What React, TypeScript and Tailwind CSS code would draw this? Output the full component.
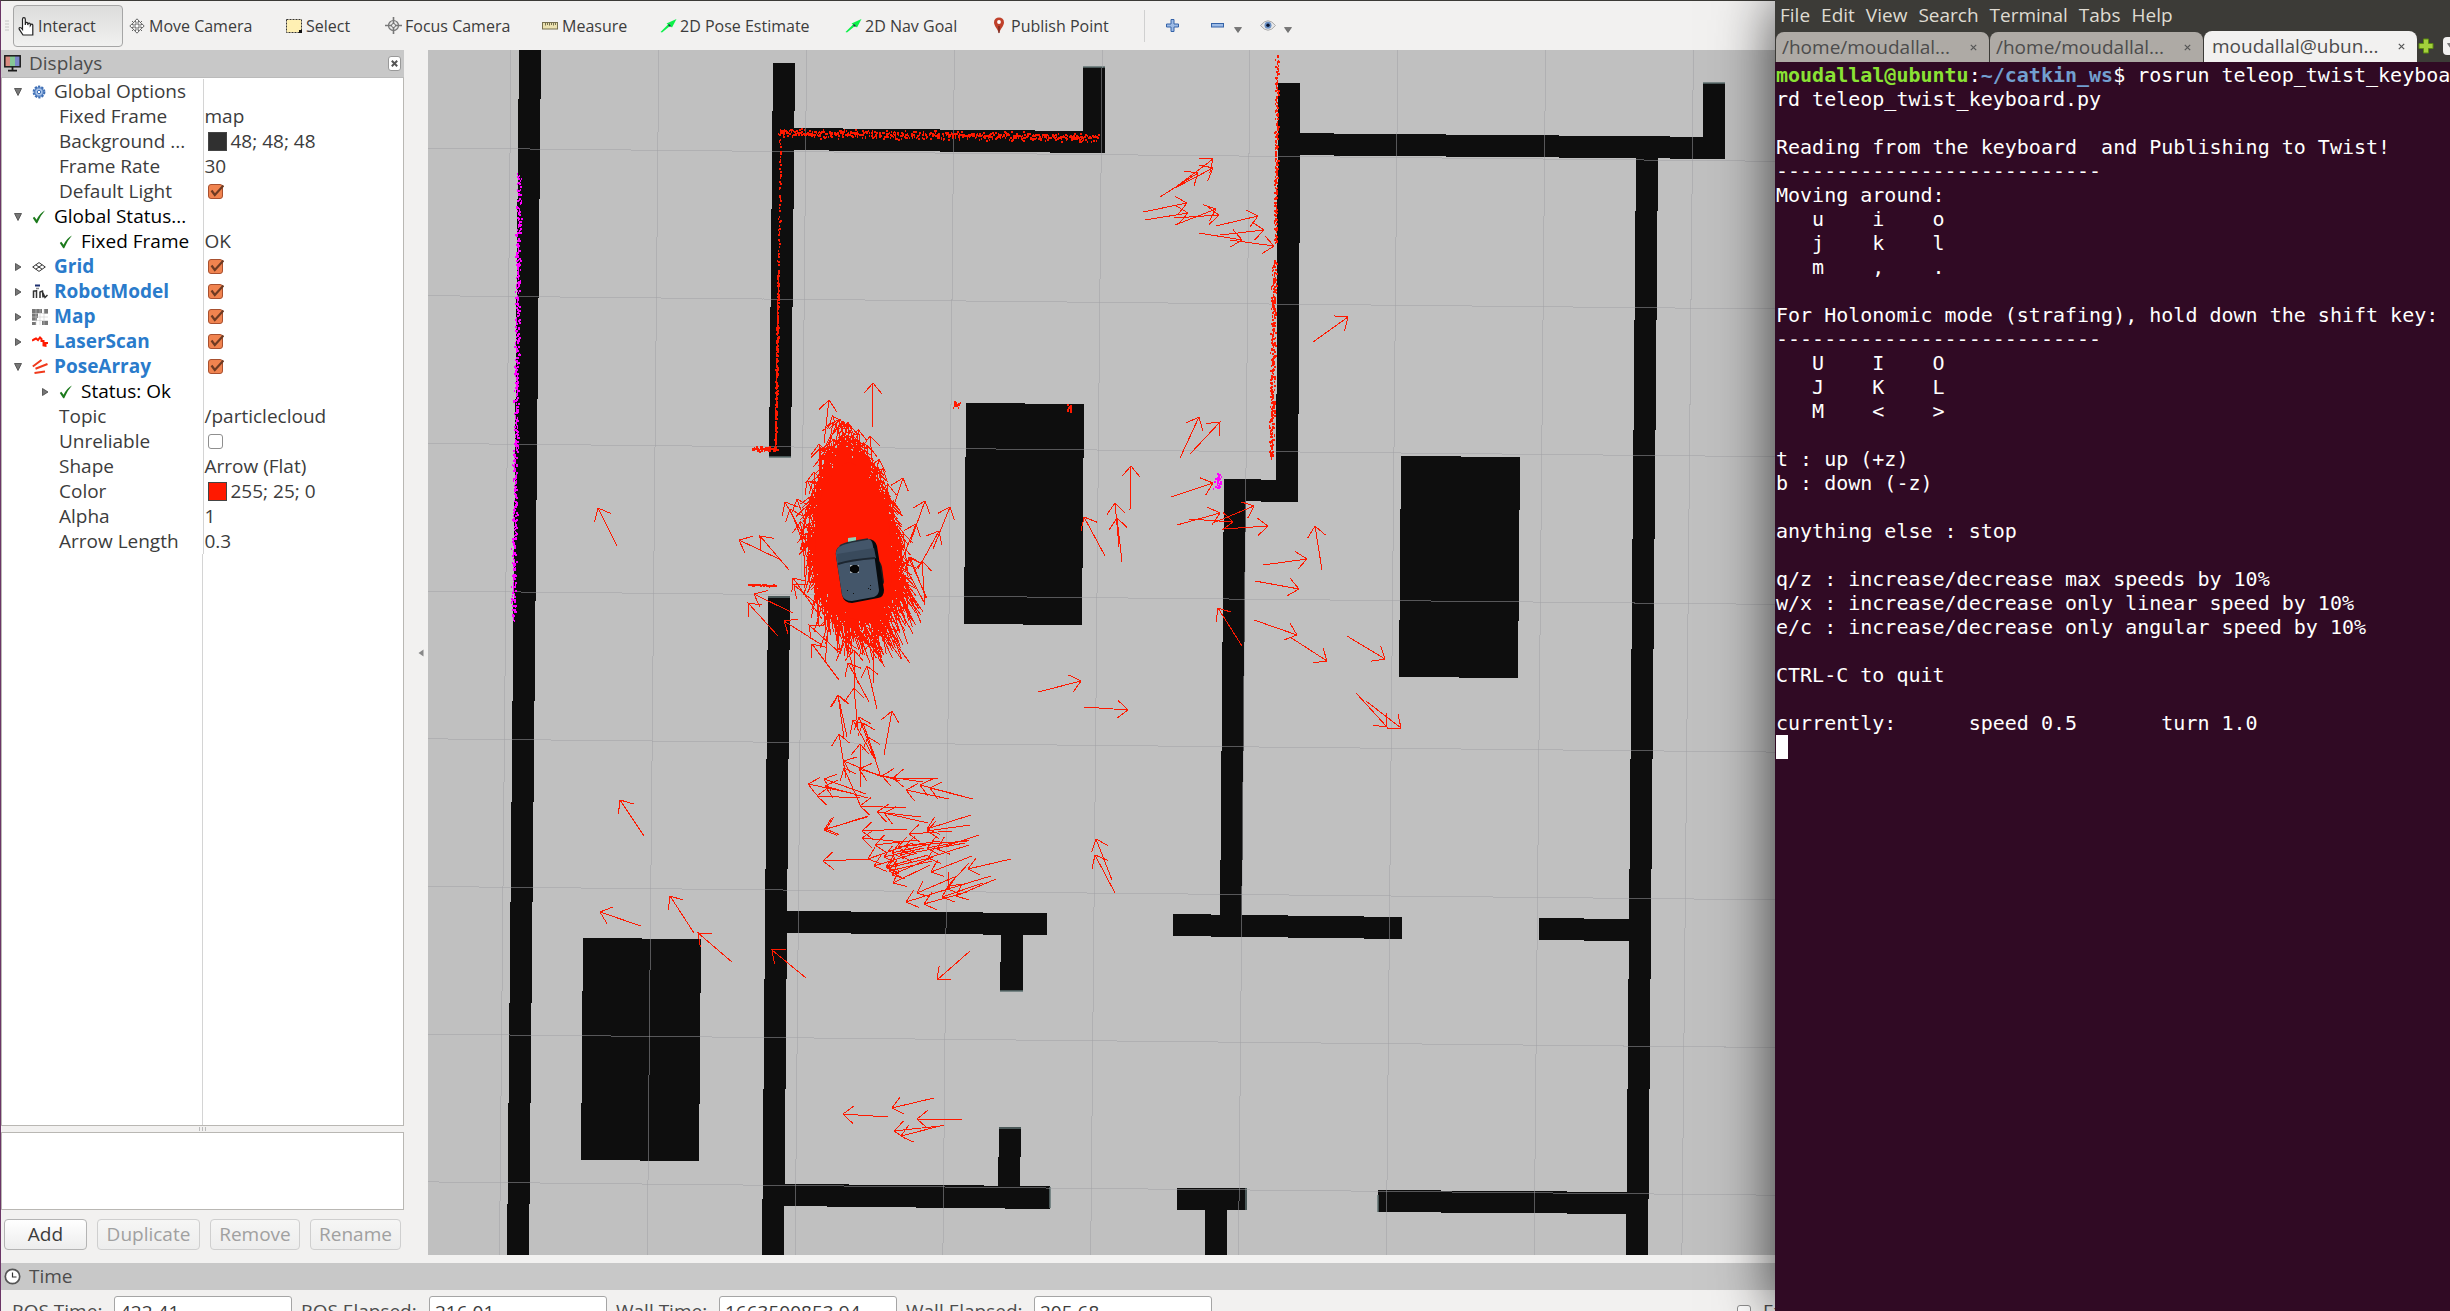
import React from "react";

const UI = "font-['Open_Sans','Noto_Sans',sans-serif]";
const RED = "#ff1900";

/* ---------- icons ---------- */

const HandIcon = () => (
  <svg width="18" height="20" viewBox="0 0 18 20" className="shrink-0">
    <path
      d="M4.5 12V3.2a1.4 1.6 0 0 1 2.8 0V9l.2-1.8a1.2 1.2 0 0 1 2.3.2V9l.3-1.2a1.2 1.2 0 0 1 2.2.3v1.4l.5-.9a1.1 1.1 0 0 1 2 .5V19H5L1.2 13.2c-.6-2 1.4-2.6 3.3.2Z"
      fill="#fff" stroke="#222" strokeWidth="1.2" />
  </svg>
);
const MoveIcon = () => (
  <svg width="16" height="16" viewBox="0 0 16 16" className="shrink-0" fill="#fff" stroke="#555" strokeWidth="0.9">
    <path d="M8 .8 10.6 3.6H9V7h3.4V5.4L15.2 8l-2.8 2.6V9H9v3.4h1.6L8 15.2l-2.6-2.8H7V9H3.6v1.6L.8 8l2.8-2.6V7H7V3.6H5.4Z" />
    <path d="M3 3l2 2M13 3l-2 2M3 13l2-2M13 13l-2-2" />
  </svg>
);
const SelectIcon = () => (
  <svg width="16" height="14" viewBox="0 0 16 14" className="shrink-0">
    <rect x="0.5" y="0.5" width="15" height="13" fill="#fff0b3" stroke="#333" strokeDasharray="2 1" />
    <path d="M13 11h3v3h-3z" fill="#111" />
  </svg>
);
const FocusIcon = () => (
  <svg width="17" height="17" viewBox="0 0 17 17" className="shrink-0" fill="none" stroke="#777">
    <circle cx="8.5" cy="8.5" r="5" fill="#e8e8e8" strokeWidth="1.2" />
    <circle cx="8.5" cy="8.5" r="2" />
    <path d="M8.5 0v7M8.5 10v7M0 8.500h7M10 8.500h7" strokeWidth="1.6" />
  </svg>
);
const RulerIcon = () => (
  <svg width="16" height="8" viewBox="0 0 16 8" className="shrink-0">
    <rect x="0.5" y="0.5" width="15" height="6.500" fill="#ece2b0" stroke="#77704f" />
    <path d="M3.500 1v2.500M5.500 1v2M7.500 1v2.500M9.500 1v2M11.500 1v2.500M13.500 1v2" stroke="#77704f" />
  </svg>
);
const GreenArrowIcon = () => (
  <svg width="17" height="14" viewBox="0 0 17 14" className="shrink-0">
    <path d="M.5 13 8 5.500 6.500 4.500 16.500 0 12 8.500 10 7 2 13.500Z" fill="#0df04a" />
    <path d="M8.500 5.500 10.500 7.500" stroke="#234" strokeWidth="1.500" />
  </svg>
);
const PinIcon = () => (
  <svg width="12" height="17" viewBox="0 0 12 17" className="shrink-0">
    <path d="M6 16.500C5 12 1 9 1 5.400a5 5 0 0 1 10 0C11 9 7 12 6 16.500Z" fill="#c0402a" />
    <circle cx="6" cy="5" r="1.900" fill="#fff" />
    <path d="M6 16V9" stroke="#5c1f18" />
  </svg>
);
const PlusIcon = () => (
  <svg width="13" height="13" viewBox="0 0 13 13">
    <path d="M5 .5h3V5h4.500v3H8v4.500H5V8H.5V5H5Z" fill="#9dbbe6" stroke="#3563a8" />
  </svg>
);
const MinusIcon = () => (
  <svg width="13" height="5" viewBox="0 0 13 5">
    <rect x=".5" y=".5" width="12" height="3.500" fill="#9dbbe6" stroke="#3563a8" />
  </svg>
);
const EyeIcon = () => (
  <svg width="16" height="11" viewBox="0 0 16 11">
    <path d="M.5 5.500Q8-4 15.500 5.500 8 15 .5 5.500Z" fill="#e9e9e9" stroke="#aaa" />
    <circle cx="8" cy="5.300" r="3.500" fill="#6b90c4" />
    <circle cx="8" cy="5.300" r="1.700" fill="#0a1530" />
  </svg>
);
const CaretDown = () => (
  <svg width="8" height="6" viewBox="0 0 8 6">
    <path d="M.5 .5h7L4 5.500Z" fill="#777" stroke="#555" strokeWidth=".6" />
  </svg>
);
const MonitorIcon = () => (
  <svg width="17" height="17" viewBox="0 0 17 17" className="shrink-0">
    <path d="M1 1h5v10H1z" fill="#d98a80" />
    <path d="M6 1h5v10H6z" fill="#86c796" />
    <path d="M11 1h5v10h-5z" fill="#7b86c9" />
    <rect x=".8" y=".8" width="15.400" height="11" fill="none" stroke="#1b1b1b" strokeWidth="1.500" />
    <path d="M8.500 12v3M4 15.600h9" stroke="#1b1b1b" strokeWidth="1.800" />
  </svg>
);
const ClockIcon = () => (
  <svg width="17" height="17" viewBox="0 0 17 17" className="shrink-0">
    <circle cx="8.500" cy="8.500" r="7.200" fill="#fff" stroke="#555" strokeWidth="1.700" />
    <path d="M8.500 4.500v4.500h4" fill="none" stroke="#333" strokeWidth="1.200" />
  </svg>
);
const GearIcon = () => (
  <svg width="14" height="14" viewBox="0 0 14 14">
    <circle cx="7" cy="7" r="5.400" fill="#a9c4ea" stroke="#3f6fb5" strokeWidth="2" strokeDasharray="2.200 1.200" />
    <circle cx="7" cy="7" r="4.200" fill="#a9c4ea" stroke="#3f6fb5" />
    <circle cx="7" cy="7" r="1.700" fill="#fff" stroke="#3f6fb5" />
  </svg>
);
const OkIcon = () => (
  <svg width="14" height="14" viewBox="0 0 14 14">
    <path d="M.8 8 2.300 6.800 4.600 9.800Q8 3 13 .6 8 6 5.200 13.300H4.200Z" fill="#1c7a1c" />
  </svg>
);
const GridIcon = () => (
  <svg width="14" height="10" viewBox="0 0 14 10" fill="none" stroke="#333">
    <path d="M7 .6 13.300 5 7 9.400.7 5ZM3.800 2.800l6.300 4.400M10.200 2.800 3.800 7.200" />
  </svg>
);
const RobotIcon = () => (
  <svg width="16" height="15" viewBox="0 0 16 15" fill="none" stroke="#333">
    <path d="M3 1.500h5" stroke="#1d2f6f" strokeWidth="2" />
    <path d="M4 4.500h3" stroke="#888" strokeWidth="1.500" />
    <path d="M1.500 14V6.500M4.500 14V6M1.500 7h3M8 14V7.500M8 8l2.500-1 .5 6.500M11 9l2 4.500 2.500-2.500" strokeWidth="1.500" />
  </svg>
);
const MapIcon = () => (
  <svg width="16" height="16" viewBox="0 0 16 16">
    <path d="M0 0h10v4H6v5H5v3H0zM12 0h4v5h-4zM0 13h4v3H0zM10 12h6v4h-6z" fill="#777" />
    <path d="M0 4.500h16M0 8h16M0 11.500h16M4 0v16M8 0v16M12 0v16" stroke="#cfcfcf" strokeWidth=".6" />
  </svg>
);
const LaserIcon = () => (
  <svg width="16" height="11" viewBox="0 0 16 11">
    <path d="M0 4.500 2 3.500 4 2.500 6 4 8 1.500 9.500 3V5h2v4.500l2 .3V7H16" fill="none" stroke={RED} strokeWidth="2" />
  </svg>
);
const PoseIcon = () => (
  <svg width="16" height="15" viewBox="0 0 16 15" stroke="#f03a1c" strokeWidth="2" fill="none">
    <path d="M.8 7.500 9.500 1M3.500 9.800 15.500 5M2.500 14 13 12.500" />
  </svg>
);

/* ---------- property tree ---------- */

function CheckBox({ label, checked }: { label: string; checked: boolean }) {
  return (
    <span className="relative ml-[3px] block h-[15px] w-[15px]">
      <input
        type="checkbox"
        aria-label={label}
        defaultChecked={checked}
        className="block h-[15px] w-[15px] appearance-none rounded-[3px] border border-[#8f8f8f] bg-white checked:border-[#a8502f] checked:bg-[#f0834f]"
      />
      {checked && (
        <svg width="16" height="15" viewBox="0 0 16 15" className="pointer-events-none absolute left-0 top-0">
          <path d="M3.500 6.500 6.800 11 15.500 1.500" fill="none" stroke="#6e3a22" strokeWidth="2.200" />
        </svg>
      )}
    </span>
  );
}

type Row = {
  name: string;
  level?: 1;
  open?: boolean;
  icon?: React.ReactNode;
  tone?: "display" | "status";
  value?: string;
  swatch?: string;
  checked?: boolean;
};

const rows: Row[] = [
  { name: "Global Options", open: true, icon: <GearIcon /> },
  { name: "Fixed Frame", level: 1, value: "map" },
  { name: "Background ...", level: 1, value: "48; 48; 48", swatch: "bg-[#303030]" },
  { name: "Frame Rate", level: 1, value: "30" },
  { name: "Default Light", level: 1, checked: true },
  { name: "Global Status...", open: true, icon: <OkIcon />, tone: "status" },
  { name: "Fixed Frame", level: 1, icon: <OkIcon />, tone: "status", value: "OK" },
  { name: "Grid", open: false, icon: <GridIcon />, tone: "display", checked: true },
  { name: "RobotModel", open: false, icon: <RobotIcon />, tone: "display", checked: true },
  { name: "Map", open: false, icon: <MapIcon />, tone: "display", checked: true },
  { name: "LaserScan", open: false, icon: <LaserIcon />, tone: "display", checked: true },
  { name: "PoseArray", open: true, icon: <PoseIcon />, tone: "display", checked: true },
  { name: "Status: Ok", level: 1, open: false, icon: <OkIcon />, tone: "status" },
  { name: "Topic", level: 1, value: "/particlecloud" },
  { name: "Unreliable", level: 1, checked: false },
  { name: "Shape", level: 1, value: "Arrow (Flat)" },
  { name: "Color", level: 1, value: "255; 25; 0", swatch: "bg-[#ff1900]" },
  { name: "Alpha", level: 1, value: "1" },
  { name: "Arrow Length", level: 1, value: "0.3" },
];

function Expander({ open }: { open: boolean }) {
  return (
    <button aria-label={open ? "Collapse" : "Expand"} className="flex h-3 w-3 items-center justify-center">
      <svg width="8" height="8" viewBox="0 0 8 8" fill="#777" stroke="#444" strokeWidth=".8">
        <path d={open ? "M.5 .5h7L4 7.500Z" : "M1.500 .5v7L7 4Z"} />
      </svg>
    </button>
  );
}

function TreeRow({ row }: { row: Row }) {
  const tone =
    row.tone === "display" ? "font-bold text-[#2a7bcb]" : row.tone === "status" ? "text-black" : "text-[#3c3c3c]";
  const plain = row.level === 1 && !row.icon;
  return (
    <tr className="h-[25px]">
      <td className="w-[201px] border-r border-[#d4d4d4] p-0">
        <div className={"flex items-center " + (plain ? "pl-[57px]" : row.level ? "pl-[37px]" : "pl-[10px]")}>
          {!plain && (
            <>
              <span className="h-3 w-3 shrink-0">{row.open !== undefined && <Expander open={row.open} />}</span>
              <span className="ml-2 flex w-[22px] shrink-0 items-center">{row.icon}</span>
            </>
          )}
          <span className={"whitespace-nowrap " + tone}>{row.name}</span>
        </div>
      </td>
      <td className="p-0 pl-px">
        <div className="flex items-center whitespace-nowrap text-[#3c3c3c]">
          {row.checked !== undefined && <CheckBox label={row.name} checked={row.checked} />}
          {row.swatch && <span className={"ml-[3px] mr-1 h-[19px] w-[19px] border border-[#444] " + row.swatch} />}
          {row.value}
        </div>
      </td>
    </tr>
  );
}

/* ---------- 3D view ---------- */

function makeRandom(seed: number) {
  let s = seed;
  return () => {
    s = (s * 1664525 + 1013904223) % 4294967296;
    return s / 4294967296;
  };
}

/* Arrow from tail (x1, y1) to tip (x2, y2) with an open head. */
function arrowPath(x1: number, y1: number, x2: number, y2: number) {
  const a = Math.atan2(y1 - y2, x1 - x2);
  const wing = (d: number) => `${(x2 + 14 * Math.cos(a + d)).toFixed(1)} ${(y2 + 14 * Math.sin(a + d)).toFixed(1)}`;
  return `M${x1.toFixed(1)} ${y1.toFixed(1)}L${x2.toFixed(1)} ${y2.toFixed(1)}M${wing(0.7)}L${x2.toFixed(1)} ${y2.toFixed(1)}L${wing(-0.7)}`;
}

const poses: number[][] = [
  [872, 428, 873, 383], [824, 443, 829, 400], [826, 465, 833, 422], [848, 467, 848, 423], [822, 488, 819, 444],
  [874, 480, 870, 436], [816, 516, 814, 472], [889, 520, 903, 478], [910, 543, 925, 501], [933, 549, 950, 507],
  [918, 569, 939, 531], [900, 565, 916, 524], [926, 598, 910, 557], [925, 605, 922, 561], [779, 559, 739, 540],
  [789, 570, 760, 536], [806, 540, 785, 502], [812, 541, 797, 499], [806, 550, 790, 509], [822, 619, 793, 578],
  [823, 609, 794, 585], [793, 613, 754, 594], [778, 636, 748, 603], [822, 645, 784, 621], [841, 654, 809, 625],
  [839, 680, 812, 644], [869, 702, 848, 663], [877, 709, 867, 666], [847, 737, 838, 695], [844, 738, 838, 695],
  [858, 730, 854, 688], [854, 694, 854, 650], [884, 755, 892, 711], [846, 778, 839, 734], [874, 757, 859, 717],
  [874, 758, 853, 720], [876, 760, 863, 723], [861, 787, 860, 744], [880, 774, 868, 737], [858, 683, 845, 641],
  [1038, 692, 1081, 681], [1084, 707, 1128, 710], [1105, 556, 1084, 517], [882, 777, 844, 761], [861, 807, 844, 768],
  [851, 793, 808, 784], [866, 794, 824, 779], [868, 798, 825, 786], [860, 798, 817, 796], [900, 781, 859, 769],
  [923, 782, 882, 776], [938, 778, 893, 778], [949, 799, 906, 790], [962, 796, 920, 785], [973, 799, 930, 788],
  [906, 808, 860, 806], [921, 817, 877, 812], [928, 823, 884, 813], [868, 816, 824, 830], [867, 817, 826, 829],
  [907, 829, 862, 831], [903, 842, 862, 838], [971, 815, 927, 829], [970, 825, 927, 831], [952, 831, 909, 834],
  [917, 840, 875, 845], [870, 859, 823, 861], [913, 843, 868, 859], [917, 853, 874, 866], [930, 858, 887, 868],
  [932, 861, 889, 871], [928, 855, 886, 867], [930, 865, 893, 883], [933, 857, 892, 875], [935, 843, 892, 853],
  [940, 841, 898, 847], [924, 848, 884, 857], [972, 856, 931, 872], [1011, 859, 968, 869], [969, 863, 948, 886],
  [957, 876, 917, 893], [948, 889, 906, 902], [967, 892, 924, 904], [991, 876, 948, 889], [996, 879, 956, 896],
  [983, 883, 942, 897], [979, 835, 937, 849], [969, 840, 927, 848], [969, 845, 928, 858], [967, 841, 905, 846],
  [965, 843, 900, 855], [1112, 880, 1096, 839], [1115, 893, 1095, 855], [970, 951, 937, 980], [806, 978, 772, 950],
  [732, 962, 698, 933], [1180, 458, 1199, 417], [1190, 454, 1220, 422], [1130, 510, 1131, 466], [1119, 547, 1115, 503],
  [1122, 562, 1117, 518], [1171, 497, 1213, 483], [1177, 525, 1220, 513], [1189, 519, 1233, 522], [1213, 523, 1254, 506],
  [1223, 529, 1268, 526], [1322, 570, 1315, 526], [1263, 565, 1307, 559], [1255, 581, 1299, 589], [1242, 646, 1218, 608],
  [1254, 620, 1297, 635], [1290, 637, 1327, 661], [1347, 636, 1385, 659], [1356, 693, 1387, 727], [1366, 701, 1401, 728],
  [1176, 187, 1213, 159], [1175, 188, 1213, 168], [1160, 197, 1198, 173], [1143, 212, 1187, 203], [1145, 220, 1188, 213],
  [1175, 225, 1216, 209], [1174, 218, 1219, 215], [1216, 226, 1258, 216], [1220, 235, 1264, 230], [1199, 233, 1242, 240],
  [1230, 240, 1274, 246], [1313, 342, 1348, 317], [617, 546, 598, 508], [644, 836, 620, 800], [641, 926, 600, 912],
  [694, 933, 670, 896], [888, 1117, 843, 1114], [934, 1098, 892, 1108], [940, 1126, 894, 1131], [944, 1125, 901, 1136],
  [962, 1120, 917, 1119],
];
const posePath = poses.map(([a, b, c, d]) => arrowPath(a, b, c, d)).join("");

/* Dense particle cloud round the robot. */
const cloudPath = (() => {
  const rnd = makeRandom(7);
  let d = "";
  for (let i = 0; i < 950; i++) {
    const t = rnd() * Math.PI * 2;
    const r = Math.pow(rnd(), 0.5) * (1 + 0.3 * Math.pow(rnd(), 4));
    const u = r * Math.cos(t);
    const v = r * Math.sin(t);
    const x = 853 + 7 * v + 45 * u * (v < 0 ? 1 + 0.35 * v : 1);
    const y = 526 + 92 * v;
    const lean = u * (v < 0.3 ? 0.15 : -0.1) - (v > 0.3 ? 0.2 : 0) + (rnd() + rnd() - 1) * 0.55;
    d += arrowPath(x - 44 * Math.sin(lean), y + 44 * Math.cos(lean), x, y);
  }
  return d;
})();

/* Jittered laser returns between two points. */
function scan(seed: number, x1: number, y1: number, x2: number, y2: number, n: number, jx: number, jy: number) {
  const rnd = makeRandom(seed);
  let d = "";
  for (let i = 0; i < n; i++) {
    const t = i / n;
    const x = Math.round(x1 + (x2 - x1) * t + (rnd() + rnd() - 1) * jx);
    const y = Math.round(y1 + (y2 - y1) * t + (rnd() + rnd() - 1) * jy);
    const w = rnd() > 0.5 ? 2 : 1;
    d += `M${x} ${y}h${w}v2h-${w}z`;
  }
  return d;
}

const redScans = [
  scan(1, 779, 132, 1098, 137, 560, 2, 5),
  scan(2, 780, 132, 778, 280, 60, 1, 6),
  scan(3, 778, 270, 775, 448, 260, 1, 2),
  scan(4, 752, 448, 777, 448, 70, 2, 3),
  scan(5, 1277, 56, 1275, 244, 170, 2, 3),
  scan(6, 1274, 260, 1271, 458, 280, 3, 3),
  scan(7, 953, 405, 960, 403, 20, 2, 4),
  scan(8, 1069, 408, 1070, 406, 18, 3, 5),
  scan(9, 749, 584, 776, 585, 60, 2, 1),
].join("");
const magentaScans = scan(10, 519, 174, 513, 620, 480, 3, 3) + scan(11, 1219, 474, 1217, 488, 40, 4, 2);

const walls = [
  "519,50 541,50 529,1255 507,1255",
  "773,63 795,63 791,457 769,457",
  "773,128 795,128 1083,131 1105,131 1105,153 773,150",
  "1083,67 1105,67 1105,153 1083,153",
  "1278,83 1300,83 1300,160 1298,502 1276,502",
  "1224,479 1298,480 1298,502 1224,501",
  "1224,479 1246,479 1242,916 1220,916",
  "1278,133 1725,137 1725,159 1278,155",
  "1703,83 1725,83 1725,159 1703,159",
  "1636,158 1658,158 1648,1255 1626,1255",
  "1173,914 1402,917 1402,939 1173,936",
  "1539,918 1629,919 1629,941 1539,940",
  "768,596 790,596 784,1255 762,1255",
  "785,911 1047,913 1047,935 785,933",
  "1001,934 1023,934 1023,991 1000,991",
  "782,1184 1050,1186 1050,1209 782,1206",
  "999,1127 1021,1127 1020,1188 998,1188",
  "1177,1188 1247,1188 1247,1210 1177,1210",
  "1205,1208 1227,1208 1227,1255 1205,1255",
  "1378,1190 1630,1192 1630,1214 1378,1212",
  "966,403 1084,404 1082,625 964,624",
  "1401,456 1520,457 1518,678 1399,677",
  "583,938 701,939 699,1161 581,1160",
];

function MapView() {
  return (
    <svg
      viewBox="428 50 1347 1205"
      preserveAspectRatio="xMinYMin slice"
      className="block h-full w-full bg-[#c0c0c0]"
      role="img"
      aria-label="3D view"
    >
      <g fill="#0e0e0e" shapeRendering="crispEdges">
        {walls.map((p) => (
          <polygon key={p} points={p} />
        ))}
      </g>
      <path
        d="M1083 67h22M1703 83h22M769 457h22M768 597h22M1000 991h23M999 1128h22M1246 1188v22M1050 1187v21M1378 1195v17"
        stroke="#5f7171" strokeWidth="1.500"
      />
      <g stroke="#a0a0a4" strokeOpacity="0.5" shapeRendering="crispEdges">
        {[0, 1, 2, 3, 4, 5, 6, 7, 8].map((k) => (
          <path key={k} d={`M${511 + 147.8 * k} 50L${499.5 + 147.8 * k} 1255`} />
        ))}
        {[0, 1, 2, 3, 4, 5, 6, 7].map((k) => (
          <path key={k} d={`M428 ${148 + 147.7 * k}L1775 ${161.3 + 147.7 * k}`} />
        ))}
      </g>
      <g fill="none" stroke={RED} shapeRendering="crispEdges">
        <path d={posePath} />
        <path d={cloudPath} />
      </g>
      <path
        d="M848 462Q860 464 870 482L886 502Q892 540 892 580L884 608 874 624 850 618 828 590 816 560Q814 520 822 494 830 472 848 462Z"
        fill={RED}
      />
      <path d={redScans} fill={RED} shapeRendering="crispEdges" />
      <path d={magentaScans} fill="#f0f" shapeRendering="crispEdges" />
      <g>
        <path d="M848 538l8-1v5l-8 1z" fill="#8fd0b8" />
        <path d="M875 561q5-2 7 6l2 15q-1 4-4 3z" fill="#1c1c1c" />
        <path d="M840 546Q842 543 868 539 875 539 877 546L884 590Q884 597 878 598L852 603Q844 603 842 595L836 556Q835 549 840 546Z" fill="#070a0d" />
        <path d="M840 546Q842 543 868 539 872 539 873 546L879 590Q879 595 874 597L852 601Q844 601 842 595L836 556Q835 549 840 546Z" fill="#44566a" />
        <path d="M837 554L874 548 876 558 838 564Z" fill="#394a5c" />
        <path d="M838 564Q850 560 875 558" fill="none" stroke="#1d2630" strokeWidth="2" />
        <path d="M840 546Q842 543 868 539" fill="none" stroke="#222c36" strokeWidth="1.500" />
        <rect x="850" y="565" width="9" height="8" fill="#aab2b8" />
        <path d="M853 565h4l2 2v4l-2 2h-4l-3-2v-4z" fill="#050505" />
        <path d="M847 590h1v1h-1zM853 593h1v1h-1zM868 588h1v1h-1zM870 585h1v1h-1zM870 589h1v1h-1z" fill="#111" />
      </g>
    </svg>
  );
}

/* ---------- chrome ---------- */

function Tool({ icon, label, width }: { icon: React.ReactNode; label: string; width: string }) {
  return (
    <button className={"flex h-full items-center gap-1 whitespace-nowrap " + width}>
      <span className="flex w-4 shrink-0 justify-center">{icon}</span>
      {label}
    </button>
  );
}

function PanelButton({ label, width, disabled }: { label: string; width: string; disabled?: boolean }) {
  return (
    <button
      disabled={disabled}
      className={
        "flex h-[31px] items-center justify-center rounded border border-[#b4b4b4] bg-linear-to-b from-white to-[#ededed] text-[#3c3c3c] disabled:border-[#cfcfcf] disabled:from-[#f6f6f5] disabled:text-[#a0a0a0] " +
        width
      }
    >
      {label}
    </button>
  );
}

function TimeField({ id, label, width, value }: { id: string; label: string; width: string; value: string }) {
  return (
    <div className="flex shrink-0 items-center gap-[10px]">
      <label htmlFor={id} className={"whitespace-nowrap " + width}>
        {label}
      </label>
      <input
        id={id}
        readOnly
        defaultValue={value}
        className="h-[31px] w-[178px] rounded-[3px] border border-[#a5a5a5] bg-white px-[5px] text-[#3c3c3c]"
      />
    </div>
  );
}

function Rviz() {
  return (
    <main className="flex min-w-0 flex-1 flex-col border-l border-t border-l-[#6b3566] border-t-[#3c3b37] bg-[#f2f1f0]">
      <nav aria-label="Tools" className="flex h-[49px] shrink-0 items-center overflow-hidden pl-1 text-[16px] text-[#3c3c3c]">
        <svg width="5" height="12" viewBox="0 0 5 12" className="shrink-0">
          <path d="M0 1h4M0 4h4M0 7h4M0 10h4" stroke="#c4c4c4" />
        </svg>
        <button className="ml-[3px] mr-[6px] flex h-[42px] w-[110px] shrink-0 items-center gap-[2px] rounded border border-[#a6a6a6] bg-linear-to-b from-[#dcdcdb] to-[#f1f1f0] pl-1">
          <HandIcon />
          Interact
        </button>
        <Tool icon={<MoveIcon />} label="Move Camera" width="w-[157px]" />
        <Tool icon={<SelectIcon />} label="Select" width="w-[99px]" />
        <Tool icon={<FocusIcon />} label="Focus Camera" width="w-[157px]" />
        <Tool icon={<RulerIcon />} label="Measure" width="w-[118px]" />
        <Tool icon={<GreenArrowIcon />} label="2D Pose Estimate" width="w-[185px]" />
        <Tool icon={<GreenArrowIcon />} label="2D Nav Goal" width="w-[146px]" />
        <Tool icon={<PinIcon />} label="Publish Point" width="w-[153px]" />
        <span className="h-8 w-px bg-[#d0d0d0]" />
        <button aria-label="Add tool" className="ml-[21px] w-[45px]"><PlusIcon /></button>
        <button aria-label="Remove tool" className="flex w-[49px] items-center gap-[10px]">
          <MinusIcon />
          <span className="pt-2"><CaretDown /></span>
        </button>
        <button aria-label="Visibility" className="flex items-center gap-2">
          <EyeIcon />
          <span className="pt-2"><CaretDown /></span>
        </button>
      </nav>

      <div className="flex min-h-0 flex-1">
        <aside className="flex w-[403px] shrink-0 flex-col text-[19px] leading-[25px]">
          <header className="flex h-7 shrink-0 items-center gap-2 border-b border-[#bbb] bg-[#c8c8c8] pl-[3px] pr-[3px] text-[#4c4c4c]">
            <MonitorIcon />
            <h2 className="flex-1">Displays</h2>
            <button aria-label="Close Displays" className="flex h-[15px] w-[13px] items-center justify-center rounded-[3px] border border-[#999] bg-white">
              <svg width="7" height="7" viewBox="0 0 7 7"><path d="M.8 .8l5.400 5.400M6.200 .8.8 6.200" stroke="#555" strokeWidth="2" /></svg>
            </button>
          </header>
          <div className="flex min-h-0 flex-1 flex-col overflow-hidden border border-t-0 border-[#b9b7b3] bg-white pt-px">
            <table className="w-full table-fixed border-collapse">
              <colgroup>
                <col className="w-[201px]" />
                <col />
              </colgroup>
              <tbody>
                {rows.map((r, i) => (
                  <TreeRow key={i} row={r} />
                ))}
              </tbody>
            </table>
            <div className="w-[201px] flex-1 border-r border-[#d4d4d4]" />
          </div>
          <div className="flex h-[6px] shrink-0 items-center justify-center gap-[2px]">
            <span className="h-1 w-px bg-[#bbb]" />
            <span className="h-1 w-px bg-[#bbb]" />
            <span className="h-1 w-px bg-[#bbb]" />
          </div>
          <div className="h-[78px] shrink-0 border border-[#b9b7b3] bg-white" />
          <div className="flex shrink-0 gap-[10px] pb-[5px] pl-[3px] pt-[9px]">
            <PanelButton label="Add" width="w-[83px]" />
            <PanelButton label="Duplicate" width="w-[103px]" disabled />
            <PanelButton label="Remove" width="w-[90px]" disabled />
            <PanelButton label="Rename" width="w-[91px]" disabled />
          </div>
        </aside>
        <button aria-label="Hide left panel" className="flex w-6 shrink-0 items-center justify-end pr-1">
          <svg width="6" height="8" viewBox="0 0 6 8"><path d="M5.500 .5v7L.5 4Z" fill="#888" /></svg>
        </button>
        <div className="min-w-0 flex-1 overflow-hidden">
          <MapView />
        </div>
      </div>

      <footer className="mt-2 shrink-0 text-[19px] text-[#4c4c4c]">
        <div className="flex h-[27px] items-center gap-2 bg-[#c8c8c8] pl-[3px]">
          <ClockIcon />
          <h2>Time</h2>
        </div>
        <div className="flex h-[21px] items-start gap-[9px] overflow-hidden pl-[11px] pt-[6px]">
          <TimeField id="ros-time" label="ROS Time:" width="w-[92px]" value="422.41" />
          <TimeField id="ros-elapsed" label="ROS Elapsed:" width="w-[118px]" value="216.01" />
          <TimeField id="wall-time" label="Wall Time:" width="w-[93px]" value="1663500853.94" />
          <TimeField id="wall-elapsed" label="Wall Elapsed:" width="w-[118px]" value="205.68" />
          <label className="ml-auto flex h-[31px] w-[38px] items-center gap-3 overflow-hidden">
            <input type="checkbox" className="h-[14px] w-[14px] shrink-0 appearance-none rounded-[3px] border border-[#8f8f8f] bg-white" />
            Experimental
          </label>
        </div>
      </footer>
    </main>
  );
}

/* ---------- terminal ---------- */

const output = `
Reading from the keyboard  and Publishing to Twist!
---------------------------
Moving around:
   u    i    o
   j    k    l
   m    ,    .

For Holonomic mode (strafing), hold down the shift key:
---------------------------
   U    I    O
   J    K    L
   M    <    >

t : up (+z)
b : down (-z)

anything else : stop

q/z : increase/decrease max speeds by 10%
w/x : increase/decrease only linear speed by 10%
e/c : increase/decrease only angular speed by 10%

CTRL-C to quit

currently:      speed 0.5       turn 1.0 
`;

function Tab({ label, active }: { label: string; active?: boolean }) {
  return (
    <div
      className={
        "flex w-[213px] shrink-0 items-center justify-between rounded-t-lg pr-3 text-[#4c4c4c] " +
        (active ? "h-[31px] bg-[#f2f1f0] pl-2" : "h-[30px] bg-[#aeaaa5] pl-[6px]")
      }
    >
      <button role="tab" aria-selected={!!active} className="whitespace-nowrap">
        {label}
      </button>
      <button aria-label="Close tab">
        <svg width="7" height="7" viewBox="0 0 7 7"><path d="M.8 .8l5.400 5.400M6.200 .8.8 6.200" stroke="#555" strokeWidth="1.200" /></svg>
      </button>
    </div>
  );
}

function Terminal() {
  return (
    <section aria-label="Terminal" className="z-10 flex w-[675px] shrink-0 flex-col bg-[#300a24] shadow-[0_0_56px_rgba(0,0,0,0.7)]">
      <div className="bg-[#3c3b37] text-[19px]">
        <nav aria-label="Menu" className="flex h-[31px] items-center gap-[11px] pl-[5px] text-[#dfdbd2]">
          {["File", "Edit", "View", "Search", "Terminal", "Tabs", "Help"].map((m) => (
            <button key={m}>{m}</button>
          ))}
        </nav>
        <div className="flex h-[31px] items-end gap-px overflow-hidden pl-px">
          <Tab label="/home/moudallal..." />
          <Tab label="/home/moudallal..." />
          <Tab label="moudallal@ubun..." active />
          <button aria-label="New tab" className="mb-2 shrink-0">
            <svg width="16" height="16" viewBox="0 0 16 16"><path d="M5.500 1h5v4.500H15v5h-4.500V15h-5v-4.500H1v-5h4.500Z" fill="#a4d03c" stroke="#5c8a12" /></svg>
          </button>
          <button aria-label="Tab list" className="mb-[7px] ml-2 flex h-[18px] w-[18px] shrink-0 items-center rounded bg-[#f2f1f0] pl-1">
            <CaretDown />
          </button>
        </div>
      </div>
      <pre className="overflow-hidden pl-px pt-px font-['DejaVu_Sans_Mono',monospace] text-[20px] leading-[24px] text-white">
        <b className="text-[#8ae234]">moudallal@ubuntu</b>:<b className="text-[#729fcf]">~/catkin_ws</b>
        {"$ rosrun teleop_twist_keyboa\nrd teleop_twist_keyboard.py\n"}
        {output}
        <span className="block h-6 w-3 bg-white" />
      </pre>
    </section>
  );
}

export default function App() {
  return (
    <div className={"flex h-screen w-full overflow-hidden bg-[#f2f1f0] " + UI}>
      <Rviz />
      <Terminal />
    </div>
  );
}
